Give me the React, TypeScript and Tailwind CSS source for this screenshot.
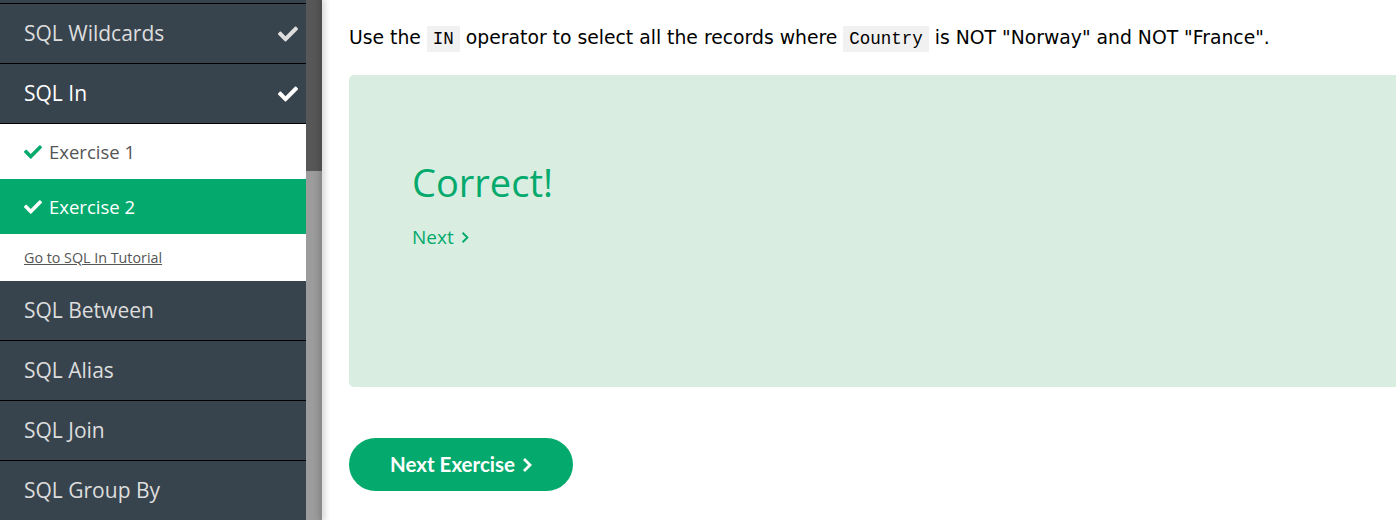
import React from "react";

const Check = ({ className }: { className?: string }) => (
  <svg viewBox="0 0 512 512" className={className} fill="currentColor">
    <path d="M173.9 439.4l-166.4-166.4c-10-10-10-26.2 0-36.2l36.2-36.2c10-10 26.2-10 36.2 0L192 312.7 432.1 72.6c10-10 26.2-10 36.2 0l36.2 36.2c10 10 10 26.2 0 36.2l-294.4 294.4c-10 10-26.2 10-36.2 0z" />
  </svg>
);

const NavItem = ({ label, done, active }: { label: string; done?: boolean; active?: boolean }) => (
  <div className="flex h-[60px] items-center justify-between border-b border-black pl-6 pr-2">
    <span className={active ? "text-white" : "text-[#dddddd]"}>{label}</span>
    {done && <Check className={active ? "h-[20px] w-[20px] text-white" : "h-[20px] w-[20px] text-[#dddddd]"} />}
  </div>
);

const Code = ({ children }: { children: React.ReactNode }) => (
  <span className="bg-[#f1f1f1] px-[6px] py-[3px] font-['Liberation_Mono',monospace] text-[17.5px] text-black">
    {children}
  </span>
);

export default function App() {
  return (
    <div className="flex h-[520px] w-[1396px] overflow-hidden bg-white">
      <div className="relative flex w-[322px] shrink-0">
        <div className="w-[306px] bg-[#38444d] font-['Open_Sans',sans-serif] text-[21px]">
          <div className="h-[4px] border-b border-black" />
          <NavItem label="SQL Wildcards" done />
          <NavItem label="SQL In" done active />
          <div className="bg-white text-[18.5px]">
            <div className="flex h-[55px] items-center gap-[7px] pl-6 text-[#555555]">
              <Check className="h-[18px] w-[18px] text-[#04aa6d]" />
              Exercise 1
            </div>
            <div className="flex h-[55px] items-center gap-[7px] bg-[#04aa6d] pl-6 text-white">
              <Check className="h-[18px] w-[18px] text-white" />
              Exercise 2
            </div>
            <div className="flex h-[47px] items-center pl-6 text-[14.3px] text-[#555555] underline">
              Go to SQL In Tutorial
            </div>
          </div>
          <NavItem label="SQL Between" />
          <NavItem label="SQL Alias" />
          <NavItem label="SQL Join" />
          <NavItem label="SQL Group By" />
        </div>
        <div className="flex w-[16px] flex-col bg-[#9c9c9c]">
          <div className="h-[171px] bg-[#575757]" />
        </div>
        <div className="w-0 shadow-[0_0_6px_2px_rgba(0,0,0,0.25)]" />
      </div>

      <div className="flex-1 pl-[27px] pt-[24px] font-['DejaVu_Sans',sans-serif]">
        <p className="text-[18.8px] leading-[27px] text-black">
          Use the <Code>IN</Code> operator to select all the records where <Code>Country</Code> is NOT "Norway" and NOT "France".
        </p>
        <div className="mt-[22px] h-[312px] rounded-l-[5px] bg-[#d9eee1] pl-[63px] pt-[85px] font-['Open_Sans',sans-serif] text-[#04aa6d]">
          <div className="text-[38px] leading-[44px]">Correct!</div>
          <div className="mt-[19px] flex items-center gap-[7px] text-[19px]">
            Next
            <svg viewBox="0 0 10 16" className="h-[13px] w-[8px]" fill="none" stroke="currentColor" strokeWidth="2.4">
              <path d="M2 2l6 6-6 6" />
            </svg>
          </div>
        </div>
        <button className="mt-[51px] flex h-[53px] w-[224px] items-center justify-center gap-[7px] rounded-full bg-[#04aa6d] font-['Lato',sans-serif] text-[20.5px] font-bold text-white">
          Next Exercise
          <svg viewBox="0 0 10 16" className="h-[16px] w-[10px]" fill="none" stroke="currentColor" strokeWidth="2.8">
            <path d="M2 2l6 6-6 6" />
          </svg>
        </button>
      </div>
    </div>
  );
}
